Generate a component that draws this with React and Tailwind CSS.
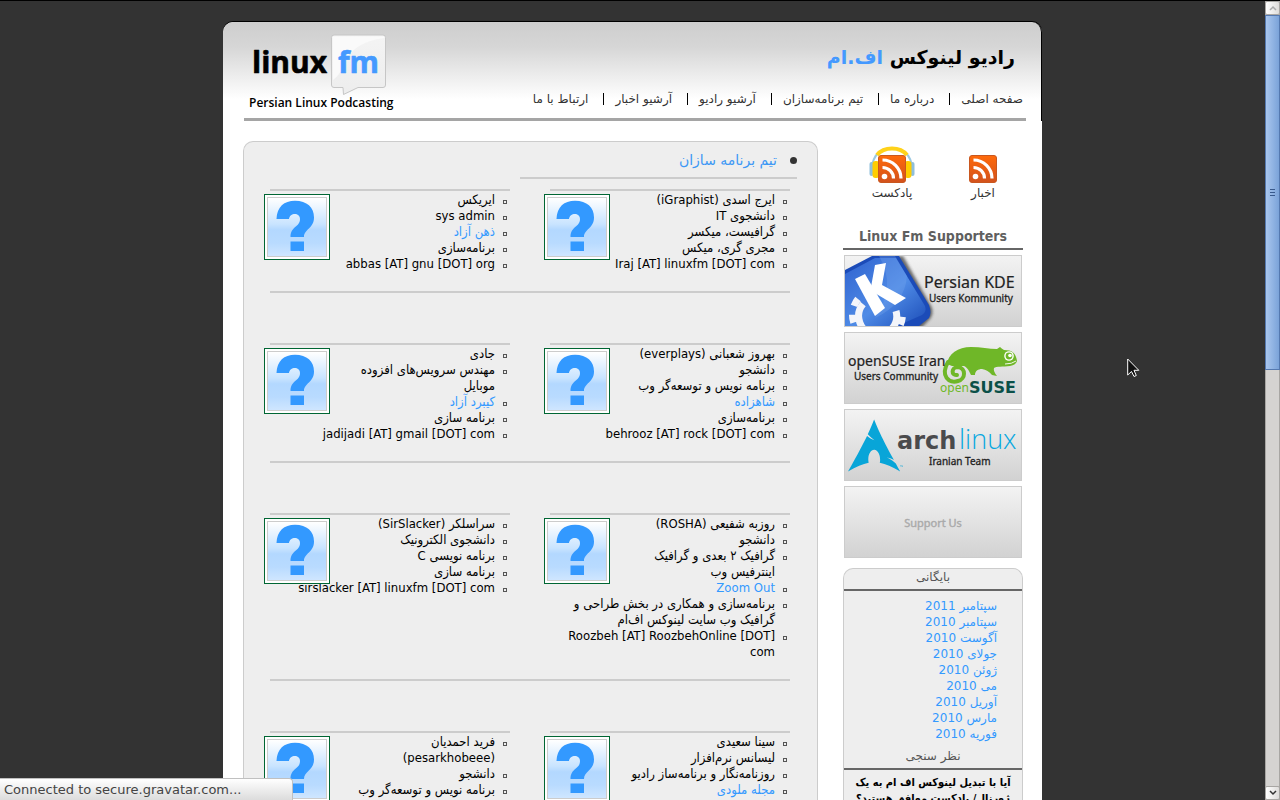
import React from "react";
import { SiArchlinux } from "react-icons/si";

const NAV = ["صفحه اصلی", "درباره ما", "تیم برنامه‌سازان", "آرشیو رادیو", "آرشیو اخبار", "ارتباط با ما"];

const ROWS = [
  [
    [
      { t: ["ایرج اسدی (iGraphist)"] },
      { t: ["دانشجوی IT"] },
      { t: ["گرافیست، میکسر"] },
      { t: ["مجری گری، میکس"] },
      { t: ["Iraj [AT] linuxfm [DOT] com"], ltr: true },
    ],
    [
      { t: ["ایریکس"] },
      { t: ["sys admin"], ltr: true },
      { t: ["ذهن آزاد"], link: true },
      { t: ["برنامه‌سازی"] },
      { t: ["abbas [AT] gnu [DOT] org"], ltr: true },
    ],
  ],
  [
    [
      { t: ["بهروز شعبانی (everplays)"] },
      { t: ["دانشجو"] },
      { t: ["برنامه نویس و توسعه‌گر وب"] },
      { t: ["شاهزاده"], link: true },
      { t: ["برنامه‌سازی"] },
      { t: ["behrooz [AT] rock [DOT] com"], ltr: true },
    ],
    [
      { t: ["جادی"] },
      { t: ["مهندس سرویس‌های افزوده", "موبایل"] },
      { t: ["کیبرد آزاد"], link: true },
      { t: ["برنامه سازی"] },
      { t: ["jadijadi [AT] gmail [DOT] com"], ltr: true },
    ],
  ],
  [
    [
      { t: ["روزبه شفیعی (ROSHA)"] },
      { t: ["دانشجو"] },
      { t: ["گرافیک ۲ بعدی و گرافیک", "اینترفیس وب"] },
      { t: ["Zoom Out"], link: true, ltr: true },
      { t: ["برنامه‌سازی و همکاری در بخش طراحی و", "گرافیک وب سایت لینوکس اف‌ام"] },
      { t: ["Roozbeh [AT] RoozbehOnline [DOT]", "com"], ltr: true },
    ],
    [
      { t: ["سراسلکر (SirSlacker)"] },
      { t: ["دانشجوی الکترونیک"] },
      { t: ["برنامه نویسی C"] },
      { t: ["برنامه سازی"] },
      { t: ["sirslacker [AT] linuxfm [DOT] com"], ltr: true },
    ],
  ],
  [
    [
      { t: ["سینا سعیدی"] },
      { t: ["لیسانس نرم‌افزار"] },
      { t: ["روزنامه‌نگار و برنامه‌ساز رادیو"] },
      { t: ["مجله ملودی"], link: true },
      { t: ["برنامه‌سازی"] },
    ],
    [
      { t: ["فرید احمدیان", "(pesarkhobeee)"] },
      { t: ["دانشجو"] },
      { t: ["برنامه نویس و توسعه‌گر وب"] },
      { t: ["برنامه‌سازی"] },
    ],
  ],
];

const MONTHS = [
  "سپتامبر 2011",
  "سپتامبر 2010",
  "آگوست 2010",
  "جولای 2010",
  "ژوئن 2010",
  "می 2010",
  "آوریل 2010",
  "مارس 2010",
  "فوریه 2010",
];

function Avatar() {
  return (
    <div className="-ml-[6px] mt-[3px] size-[66px] shrink-0 border border-[#006633] bg-white p-[2px]">
      <div className="size-[60px] border border-[#cccccc] bg-[linear-gradient(#ffffff_0%,#c9e4ff_45%,#b3d8ff_55%,#b9dbff_78%,#cfe6ff_100%)]">
        <svg viewBox="4 4 58 58" className="size-[58px]" aria-hidden="true">
          <path
            d="M12.500 25C13 13 20 6.800 31 6.800C43 6.800 50 13.500 50 23.500C50 34.500 40 35 40 43H26.500C26.500 32 36 33.500 36 25C36 18 25.500 18.500 25 25Z"
            fill="#3399ff"
          />
          <rect x="26.500" y="47.500" width="13.500" height="9.500" fill="#3399ff" />
        </svg>
      </div>
    </div>
  );
}

function Person({ lines }) {
  return (
    <div className="flex items-start border-t-2 border-[#cccccc] pr-[3px]">
      <ul className="min-w-0 flex-1 whitespace-nowrap pt-px font-['DejaVu_Sans_Condensed','DejaVu_Sans',sans-serif] text-[13px] leading-[16px] text-black">
        {lines.map((l, i) => (
          <li key={i} className="flex items-start gap-[8px]">
            <span className="mt-[8px] size-[4px] shrink-0 border border-[#555555]" />
            <span dir={l.ltr ? "ltr" : "rtl"} className="text-right">
              {l.t.map((s, j) => (
                <span key={j} className="block">
                  {l.link ? (
                    <a href="#" className="text-[#3399ff]">
                      {s}
                    </a>
                  ) : (
                    s
                  )}
                </span>
              ))}
            </span>
          </li>
        ))}
      </ul>
      <Avatar />
    </div>
  );
}

function Wordmark() {
  return (
    <svg width="144" height="62" viewBox="0 0 144 62" role="img" aria-label="linux fm">
      <defs>
        <linearGradient id="bubble" x1="0" y1="0" x2="0" y2="1">
          <stop offset="0" stopColor="#f4f4f4" />
          <stop offset="1" stopColor="#ededed" />
        </linearGradient>
      </defs>
      <path
        d="M83 1H132Q134.500 1 134.500 3.500V51Q134.500 53.500 132 53.500H107L92.500 60.500L92 53.500H83Q80.500 53.500 80.500 51V3.500Q80.500 1 83 1Z"
        fill="url(#bubble)"
        stroke="#c6c6c6"
      />
      <path d="M82 2.500H133V4Q103 8 94 28Q90 40 82 46Z" fill="#fafafa" />
      <text x="1" y="38.500" fontSize="30" fontWeight="700" fill="#000" stroke="#000" strokeWidth="0.600" strokeLinejoin="round" className="font-['Open_Sans',sans-serif]">
        linux
      </text>
      <text x="87" y="38.500" fontSize="30" fontWeight="700" fill="#4499ff" stroke="#4499ff" strokeWidth="0.600" strokeLinejoin="round" className="font-['Open_Sans',sans-serif]">
        fm
      </text>
    </svg>
  );
}

function Header() {
  return (
    <header className="rounded-t-[10px] border-r border-black bg-[linear-gradient(#cecece_0%,#d6d6d6_25%,#ffffff_78%)] pl-[21px] pr-[15px] shadow-[0_-1px_0_#000]">
      <div className="flex items-start justify-between border-b-[3px] border-[#a5a5a5] pb-[8px]">
        <div className="pt-[14px]">
          <h1 className="pr-[11px] font-['DejaVu_Sans',sans-serif] text-[19px] font-bold leading-[42px] text-black">
            رادیو لینوکس <span className="text-[#4499ff]">اف.ام</span>
          </h1>
          <nav className="mt-[13px] flex items-center pr-[3px] font-['DejaVu_Sans',sans-serif] text-[12px] leading-[16px] text-[#333333]">
            {NAV.map((n, i) => (
              <a key={n} href="#" className={i ? "flex items-center" : ""}>
                {i > 0 && <span className="ml-[15px] mr-[11px] h-[12px] w-px bg-black" />}
                {n}
              </a>
            ))}
          </nav>
        </div>
        <div dir="ltr" className="ml-[5px] pt-[12px]">
          <div className="pl-[2px]">
            <Wordmark />
          </div>
          <p className="font-['Open_Sans',sans-serif] text-[12px] font-semibold leading-[14px] text-black">
            Persian Linux Podcasting
          </p>
        </div>
      </div>
    </header>
  );
}

function Rss({ phones }) {
  return (
    <svg width="46" height="38" viewBox="0 0 46 38" aria-hidden="true">
      <defs>
        <linearGradient id="rss" x1="0" y1="0" x2="0" y2="1">
          <stop offset="0" stopColor="#ff6a0a" />
          <stop offset="1" stopColor="#d2521d" />
        </linearGradient>
      </defs>
      {phones && (
        <g fill="none">
          <path d="M3 19C5 10 9 6 14 4M43 19C41 10 37 6 32 4" stroke="#9cc9e2" strokeWidth="2" />
          <path d="M8 9C12 4 17 2.500 23 2.500S34 4 38 9" stroke="#ffd21a" strokeWidth="4" />
          <rect x="0.500" y="16" width="4" height="14" rx="2" fill="#8fbfdb" />
          <rect x="41.500" y="16" width="4" height="14" rx="2" fill="#8fbfdb" />
          <rect x="3.500" y="15" width="7" height="17" rx="3" fill="#ffcc00" />
          <rect x="35.500" y="15" width="7" height="17" rx="3" fill="#ffcc00" />
        </g>
      )}
      <rect x="9.500" y="9.500" width="27" height="27" rx="2.500" fill="url(#rss)" stroke="#c9571f" />
      <circle cx="15.500" cy="30.500" r="2.800" fill="#fff" />
      <path d="M13.500 21.500A11 11 0 0 1 24.500 32.500M13.500 14A18.500 18.500 0 0 1 32 32.500" fill="none" stroke="#fff" strokeWidth="3.200" />
    </svg>
  );
}

function Banner({ label, children }) {
  return (
    <a href="#" aria-label={label} className="block border border-[#cccccc] bg-[linear-gradient(#f3f3f3,#d2d2d2)]">
      <svg viewBox="0 0 176 70" className="block w-full font-['Noto_Sans',sans-serif]">
        {children}
      </svg>
    </a>
  );
}

function Supporters() {
  return (
    <div dir="ltr" className="mt-[5px] flex flex-col gap-[5px] px-px">
      <Banner label="Persian KDE">
        <defs>
          <linearGradient id="kde" x1="0" y1="0" x2="1" y2="1">
            <stop offset="0" stopColor="#2f62cf" />
            <stop offset="0.550" stopColor="#4f8be6" />
            <stop offset="1" stopColor="#1c4db8" />
          </linearGradient>
          <filter id="soft" x="-20%" y="-20%" width="140%" height="140%">
            <feGaussianBlur stdDeviation="1.500" />
          </filter>
        </defs>
        <path d="M30 0H58L87 52Q89 60 82 66L76 72H20Z" fill="#333" opacity="0.700" filter="url(#soft)" />
        <path d="M0 14L27 0H54L84 49Q87 57 84 62L74 70H0Z" fill="#1b4bb8" />
        <path d="M0 18L30 2H51L80 50Q82 56 77 59L52 70H0Z" fill="url(#kde)" />
        <path d="M34 0H50L62 20Q60 48 30 62Q52 30 34 0Z" fill="#7aaaf0" opacity="0.300" />
        <g fill="none" stroke="#f3f5fa">
          <path d="M18 48A19 19 0 1 0 51 55" strokeWidth="7" />
          <path d="M13 43A25 25 0 1 0 57 54" strokeWidth="7" strokeDasharray="8 9" />
        </g>
        <path d="M10 23L20 18L40 52L30 60Z" fill="#fff" />
        <path d="M26 31L30 9L41 7L37 29L61 42L50 49L28 36Z" fill="#fff" />
        <text x="79" y="32" fontSize="16" fill="#222" stroke="#222" strokeWidth="0.200">Persian KDE</text>
        <text x="84" y="46" fontSize="10" fill="#222" stroke="#222" strokeWidth="0.300">Users Kommunity</text>
      </Banner>
      <Banner label="openSUSE Iran">
        <path
          d="M102 31C103 21 113 14 126 14C136 14 144 16 152 16L155 14Q157 16 159 17C167 17 171 20 172 28Q171 32 165 33C158 34 151 33 149 35Q148 38 152 43L147 42Q143 37 137 36C133 36 130 38 130 42L126 42C124 38 123 35 119 33L107 33Z"
          fill="#6fb728"
        />
        <path
          d="M103 29C95 43 104 51 113 48C121 46 121 35 113 34C106 34 106 43 112 42"
          fill="none"
          stroke="#6fb728"
          strokeWidth="4"
          strokeLinecap="round"
        />
        <circle cx="164" cy="23" r="4.800" fill="#fff" />
        <circle cx="164" cy="23" r="3.400" fill="#6fb728" />
        <circle cx="165" cy="22.500" r="1.800" fill="#fff" />
        <path d="M160 31Q167 31 171 28" stroke="#fff" strokeWidth="0.900" fill="none" />
        <text x="3" y="33" fontSize="14" fill="#222" stroke="#222" strokeWidth="0.200">openSUSE Iran</text>
        <text x="9" y="47" fontSize="10" fill="#222" stroke="#222" strokeWidth="0.300">Users Community</text>
        <text x="95" y="59" fontSize="12" fill="#6fb728">open</text>
        <text x="124" y="59.500" fontSize="16" fontWeight="700" fill="#0b5048" className="font-['DejaVu_Sans',sans-serif]">SUSE</text>
      </Banner>
      <Banner label="Arch Linux">
        <g transform="translate(3 8)">
          <SiArchlinux size={55} color="#08a5d8" />
        </g>
        <text x="52" y="39" fontSize="24" fontWeight="700" fill="#4a4a4c" className="font-['DejaVu_Sans',sans-serif]">arch</text>
        <text x="114" y="39" fontSize="27" fontWeight="300" fill="#08a8e0" className="font-['Open_Sans',sans-serif]">linux</text>
        <text x="84" y="55" fontSize="10" fill="#222" stroke="#222" strokeWidth="0.300">Iranian Team</text>
      </Banner>
      <Banner label="Support Us">
        <text x="88" y="40" textAnchor="middle" fontSize="11" fill="#aaaaaa" stroke="#aaaaaa" strokeWidth="0.400">Support Us</text>
      </Banner>
    </div>
  );
}

function Sidebar() {
  return (
    <aside className="w-[180px] shrink-0 font-['DejaVu_Sans',sans-serif]">
      <div className="flex justify-between pl-[26px] pr-[17px] pt-[5px] text-[12px] leading-[18px] text-[#333333]">
        <a href="#" className="flex flex-col items-center">
          <Rss />
          اخبار
        </a>
        <a href="#" className="flex flex-col items-center">
          <Rss phones />
          پادکست
        </a>
      </div>
      <h2 dir="ltr" className="mt-[25px] border-b-2 border-[#666666] pb-[3px] text-center font-['DejaVu_Sans_Condensed','DejaVu_Sans',sans-serif] text-[14px] font-bold leading-[18px] text-[#5f5f5f]">
        Linux Fm Supporters
      </h2>
      <Supporters />
      <section className="mt-[10px] rounded-t-[10px] border border-b-0 border-[#cccccc] bg-[#eeeeee] text-[12px] leading-[16px]">
        <h2 className="border-b-2 border-[#666666] pb-[4px] text-center text-[#555555]">بایگانی</h2>
        <ul className="pb-[6px] pr-[25px] pt-[7px]">
          {MONTHS.map((m) => (
            <li key={m}>
              <a href="#" className="text-[#3399ff]">
                {m}
              </a>
            </li>
          ))}
        </ul>
        <h2 className="border-b-2 border-[#666666] pb-[4px] text-center text-[#555555]">نظر سنجی</h2>
        <p className="whitespace-nowrap pb-10 pt-[5px] text-center font-['DejaVu_Sans_Condensed','DejaVu_Sans',sans-serif] text-[11px] font-bold text-black">
          آیا با تبدیل لینوکس اف ام به یک
          <br />
          ژورنال/ پادکست موافق هستید؟
        </p>
      </section>
    </aside>
  );
}

function ScrollButton({ down }) {
  return (
    <button
      type="button"
      aria-label={down ? "Scroll down" : "Scroll up"}
      className="flex h-[14px] shrink-0 items-center justify-center rounded-[2px] border border-[#a8a6a3] bg-linear-to-r from-white to-[#dedcda]"
    >
      <svg width="8" height="6" viewBox="0 0 8 6" aria-hidden="true">
        <path d={down ? "M1 1L4 4L7 1" : "M1 5L4 2L7 5"} fill="none" stroke={down ? "#333" : "#aaa"} strokeWidth="1.500" />
      </svg>
    </button>
  );
}

function Scrollbar() {
  return (
    <div className="flex w-[15px] shrink-0 flex-col bg-[#d5d3d1] shadow-[inset_1px_0_0_#a8a6a3,inset_-1px_0_0_#a8a6a3]">
      <ScrollButton />
      <div className="flex h-[355px] flex-col items-center justify-center gap-[2px] border border-[#5579b0] bg-linear-to-r from-[#a9c6ee] to-[#7ba3d9]">
        <span className="h-px w-[5px] bg-[#38598c]" />
        <span className="h-px w-[5px] bg-[#38598c]" />
        <span className="h-px w-[5px] bg-[#38598c]" />
      </div>
      <div className="flex-1" />
      <ScrollButton down />
    </div>
  );
}

export default function App() {
  return (
    <div className="relative flex h-screen overflow-hidden border-t border-black bg-[#333333]">
      <div className="min-w-0 flex-1 overflow-hidden pt-[21px]">
        <div dir="rtl" className="mx-auto w-full max-w-[819px] rounded-t-[10px] bg-white">
          <Header />
          <div className="flex items-start gap-[25px] pl-[20px] pr-[19px] pt-[20px]">
            <Sidebar />
            <main className="min-w-0 flex-1 rounded-t-[10px] border border-b-0 border-[#cccccc] bg-[#eeeeee] pl-[26px] pr-[27px]">
              <div className="-mr-[7px] flex w-[277px] items-center gap-[13px] border-b-2 border-[#cccccc] pb-[7px] pt-[8px]">
                <span className="size-[7px] rounded-full bg-[#333333]" />
                <h2 className="font-['DejaVu_Sans',sans-serif] text-[14px] leading-[20px] text-[#3d98f5]">تیم برنامه سازان</h2>
              </div>
              <div className="flex flex-col gap-[50px] pt-[10px]">
                {ROWS.map((row, i) => (
                  <div key={i} className="grid grid-cols-2 items-start gap-x-[40px] border-b-2 border-[#cccccc] pb-[19px]">
                    {row.map((p, j) => (
                      <Person key={j} lines={p} />
                    ))}
                  </div>
                ))}
              </div>
            </main>
          </div>
        </div>
      </div>
      <Scrollbar />
      <div className="absolute bottom-0 left-0 w-[293px] rounded-tr-[4px] border-r border-t border-[#c0c0c0] bg-linear-to-b from-white to-[#dcdcdc] px-[4px] font-['DejaVu_Sans',sans-serif] text-[13px] leading-[21px] text-[#444444]">
        Connected to secure.gravatar.com...
      </div>
      <svg className="absolute left-[1127px] top-[357px]" width="13" height="20" viewBox="0 0 13 20" aria-hidden="true">
        <path d="M0.700 1V17L4.500 13.500L7 18.500L9.300 17.500L7 12.300H11.800Z" fill="#111" stroke="#fff" />
      </svg>
    </div>
  );
}
